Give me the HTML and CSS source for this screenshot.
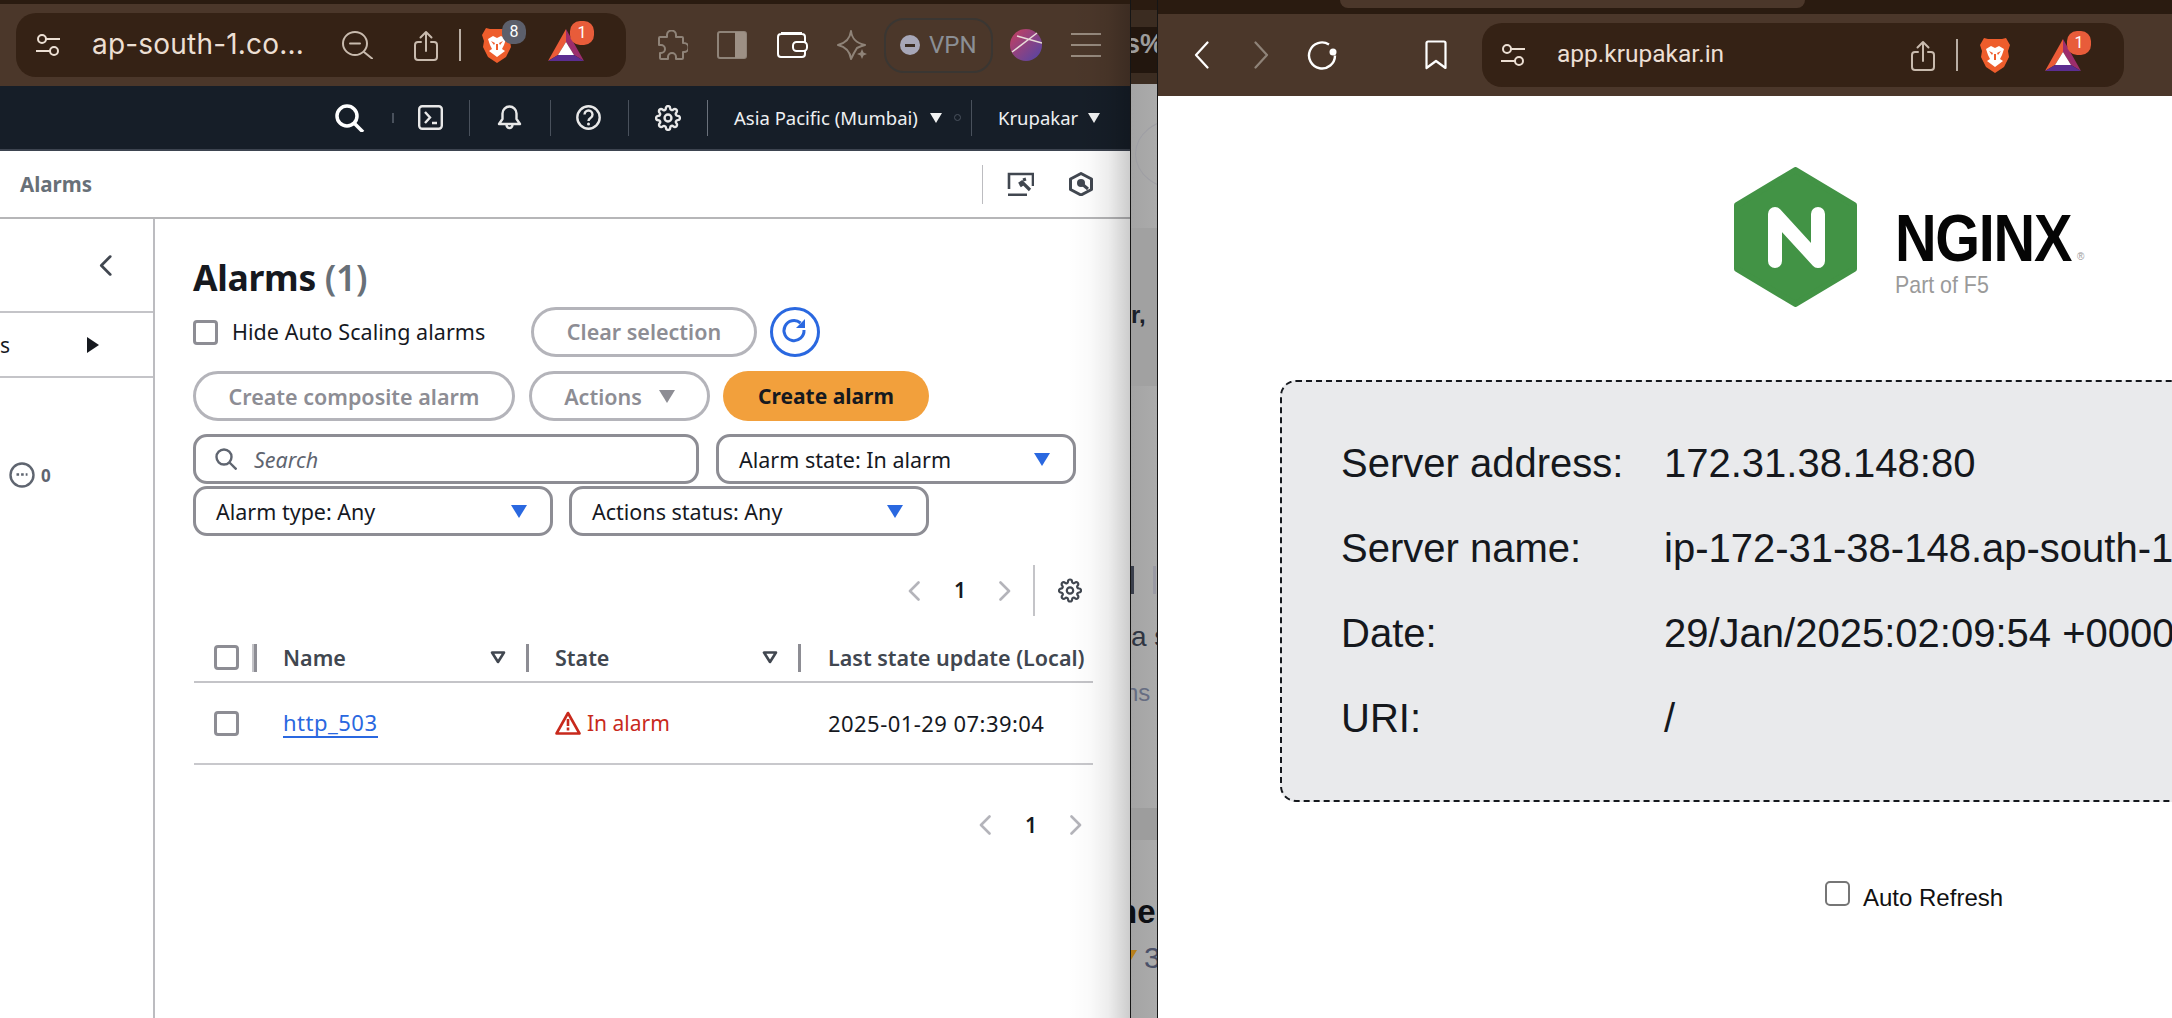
FILE: index.html
```html
<!DOCTYPE html>
<html lang="en">
<head>
<meta charset="utf-8">
<title>Alarms and NGINX status</title>
<link rel="stylesheet" href="styles.css">
</head>
<body>
<svg class="defs" aria-hidden="true">
  <symbol id="gear" viewBox="0 0 24 24"><circle cx="12" cy="12" r="3.2" fill="none" stroke="currentColor" stroke-width="2.200"/><path fill="none" stroke="currentColor" stroke-width="2.200" d="M19.4 15a1.65 1.65 0 0 0 .33 1.82l.06.06a2 2 0 0 1 0 2.83 2 2 0 0 1-2.83 0l-.06-.06a1.65 1.65 0 0 0-1.82-.33 1.65 1.65 0 0 0-1 1.51V21a2 2 0 0 1-2 2 2 2 0 0 1-2-2v-.09A1.65 1.65 0 0 0 9 19.4a1.65 1.65 0 0 0-1.82.33l-.06.06a2 2 0 0 1-2.83 0 2 2 0 0 1 0-2.83l.06-.06a1.65 1.65 0 0 0 .33-1.82 1.65 1.65 0 0 0-1.51-1H3a2 2 0 0 1-2-2 2 2 0 0 1 2-2h.09A1.65 1.65 0 0 0 4.6 9a1.65 1.65 0 0 0-.33-1.82l-.06-.06a2 2 0 0 1 0-2.83 2 2 0 0 1 2.83 0l.06.06a1.65 1.65 0 0 0 1.82.33H9a1.65 1.65 0 0 0 1-1.51V3a2 2 0 0 1 2-2 2 2 0 0 1 2 2v.09a1.65 1.65 0 0 0 1 1.51 1.65 1.65 0 0 0 1.82-.33l.06-.06a2 2 0 0 1 2.83 0 2 2 0 0 1 0 2.83l-.06.06a1.65 1.65 0 0 0-.33 1.82V9a1.65 1.65 0 0 0 1.51 1H21a2 2 0 0 1 2 2 2 2 0 0 1-2 2h-.09a1.65 1.65 0 0 0-1.51 1z"/></symbol>
  <symbol id="sliders" viewBox="0 0 24 22"><g fill="none" stroke="currentColor" stroke-width="2"><circle cx="6" cy="5" r="4"/><path d="M10 5h14"/><circle cx="18" cy="17" r="4"/><path d="M0 17h14"/></g></symbol>
  <symbol id="share" viewBox="0 0 24 31"><g fill="none" stroke="currentColor" stroke-width="2" stroke-linecap="round" stroke-linejoin="round"><path d="M7 12H4a3 3 0 0 0-3 3v12a3 3 0 0 0 3 3h16a3 3 0 0 0 3-3V15a3 3 0 0 0-3-3h-3"/><path d="M12 21V2M6.500 7.500 12 2l5.500 5.500"/></g></symbol>
  <symbol id="brave" viewBox="0 0 30 36"><path fill="#ee5d2c" d="M8 2h14l4-1 4 7-2 6 1 6-5 10-9 6-9-6-5-10 1-6-2-6 4-7z"/><path fill="#fff" d="M6 12l5-3 4 2 4-2 5 3-2 6-2 4 3 2-8 6-8-6 3-2-2-4z"/><path fill="#ee5d2c" d="M9 14l4 2-1 2zM21 14l-4 2 1 2zM14 17h2v6h-2z"/></symbol>
  <symbol id="bat" viewBox="0 0 36 32"><path fill="#ec5b38" d="M18 0 0 32l10-6 8-13z"/><path fill="#9c2d6c" d="M18 0l18 32-10-6-8-13z"/><path fill="#5c2d91" d="M0 32h36l-10-6H10z"/><path fill="#fff" d="M18 13l8 13H10z"/></symbol>
  <symbol id="chev-l" viewBox="0 0 12 20"><path fill="none" stroke="currentColor" stroke-width="2.600" stroke-linecap="round" stroke-linejoin="round" d="M10.500 1.500 2 10l8.500 8.500"/></symbol>
  <symbol id="chev-r" viewBox="0 0 12 20"><path fill="none" stroke="currentColor" stroke-width="2.600" stroke-linecap="round" stroke-linejoin="round" d="M1.500 1.500 10 10l-8.500 8.500"/></symbol>
</svg>

<main class="desk">
  <section class="win-left">
    <div class="edge"></div>
    <div class="toolbar">
      <div class="pill pill-left">
        <svg class="ic-sliders ml-20"><use href="#sliders"/></svg>
        <span class="url url-left ml-32">ap-south-1.co...</span>
        <svg class="ic-zoom ml-39" viewBox="0 0 31 28"><g fill="none" stroke="#c9bbae" stroke-width="2" stroke-linecap="round"><ellipse cx="13" cy="12.500" rx="12" ry="11.500"/><path d="M8 12.500h10M22 21l8 6.500"/></g></svg>
        <svg class="ic-share ml-41"><use href="#share"/></svg>
        <span class="pill-div ml-21"></span>
        <span class="ext ext-brave ml-21"><svg class="ic-brave"><use href="#brave"/></svg><b class="badge badge-gray">8</b></span>
        <span class="ext ext-bat ml-36"><svg class="ic-bat"><use href="#bat"/></svg><b class="badge badge-red">1</b></span>
      </div>
      <svg class="ic-puzzle ml-30" viewBox="0 0 32 30"><path fill="none" stroke="#8f8378" stroke-width="2" stroke-linejoin="round" d="M11 7V5a4.500 4.500 0 0 1 9 0v2h6a1 1 0 0 1 1 1v5h1a4.500 4.500 0 0 1 0 9h-1v6a1 1 0 0 1-1 1h-6v-2a4 4 0 0 0-8 0v2H5a1 1 0 0 1-1-1v-5h1a4 4 0 0 0 0-8H3V8a1 1 0 0 1 1-1z"/></svg>
      <svg class="ic-panel ml-29" viewBox="0 0 30 28"><rect x="1" y="1" width="28" height="26" rx="2" fill="none" stroke="#8f8378" stroke-width="2"/><path fill="#9d9085" d="M18 1h9a2 2 0 0 1 2 2v22a2 2 0 0 1-2 2h-9z"/></svg>
      <svg class="ic-wallet ml-30" viewBox="0 0 31 26"><g fill="none" stroke="#fff" stroke-width="2"><path d="M4 1h21M1 5a3 3 0 0 1 3-3h21a3 3 0 0 1 3 3v17a3 3 0 0 1-3 3H4a3 3 0 0 1-3-3z"/><rect x="16" y="10" width="14" height="9" rx="3.500" fill="#4b372a"/></g></svg>
      <svg class="ic-star ml-29" viewBox="0 0 31 30"><path fill="none" stroke="#8f8378" stroke-width="2" stroke-linejoin="round" d="M14 1c1 8 5 12 14 14-4 1-6 2-8 3l-3 5c-1 2-2 4-3 6-1-8-5-12-13-14 8-2 12-6 13-14z"/><path fill="#8f8378" d="M25 19l1.500 3.500L30 24l-3.500 1.500L25 29l-1.500-3.500L20 24l3.500-1.500z"/></svg>
      <div class="vpn ml-16"><span class="vpn-dot"></span><span class="vpn-text">VPN</span></div>
      <svg class="ic-avatar ml-17" viewBox="0 0 32 32"><defs><linearGradient id="av" x1="0" y1="0" x2="1" y2="1"><stop offset="0" stop-color="#c8405e"/><stop offset="1" stop-color="#4f45a8"/></linearGradient></defs><circle cx="16" cy="16" r="16" fill="url(#av)"/><path fill="none" stroke="#e8dcd8" stroke-width="1.500" d="M2 23 27 4M7 7l25 7"/></svg>
      <svg class="ic-burger ml-29" viewBox="0 0 30 24"><path stroke="#978a7e" stroke-width="2" d="M0 1h30M0 12h30M0 23h30"/></svg>
    </div>

    <nav class="navbar">
      <svg class="ic-search ml-335" viewBox="0 0 30 28"><g fill="none" stroke="#fff" stroke-width="3.500"><circle cx="12" cy="12" r="10"/><path d="M19 19l9 9"/></g></svg>
      <span class="nsep nsep-short ml-27"></span>
      <svg class="ic-nav ml-24" viewBox="0 0 25 25"><rect x="1.200" y="1.200" width="22.600" height="22.600" rx="3" fill="none" stroke="#e8e8e8" stroke-width="2.400"/><path fill="none" stroke="#e8e8e8" stroke-width="2.400" d="M7 7l5 5.500L7 18M14 18h5"/></svg>
      <span class="nsep ml-26"></span>
      <svg class="ic-nav ml-27" viewBox="0 0 24 25"><path fill="none" stroke="#e8e8e8" stroke-width="2.400" stroke-linejoin="round" d="M12 1.500a7 7 0 0 1 7 7V14l3.500 5H1.500L5 14V8.500a7 7 0 0 1 7-7zM9 20a3 3 0 0 0 6 0"/></svg>
      <span class="nsep ml-28"></span>
      <svg class="ic-nav ml-25" viewBox="0 0 25 25"><circle cx="12.500" cy="12.500" r="11.200" fill="none" stroke="#e8e8e8" stroke-width="2.400"/><path fill="none" stroke="#e8e8e8" stroke-width="2.400" d="M8.500 9.500a4 4 0 1 1 6 3.500c-1.300.8-2 1.500-2 3"/><circle cx="12.500" cy="19" r="1.500" fill="#e8e8e8"/></svg>
      <span class="nsep ml-27"></span>
      <svg class="ic-gear-nav ml-26"><use href="#gear"/></svg>
      <span class="nsep nsep-strong ml-26"></span>
      <span class="nav-text nav-region ml-26">Asia Pacific (Mumbai)</span>
      <span class="tri tri-white ml-11"></span>
      <span class="ring ml-12"></span>
      <span class="nsep ml-10"></span>
      <span class="nav-text nav-user ml-26">Krupakar</span>
      <span class="tri tri-white ml-10"></span>
    </nav>

    <div class="crumbs">
      <span class="crumb">Alarms</span>
      <span class="crumb-sep"></span>
      <svg class="ic-tool" viewBox="0 0 27 24"><g fill="none" stroke="#414750" stroke-width="2.600"><path d="M2 17V2h24v12"/><path d="M1 23h19" stroke-width="3"/><path stroke-width="3.200" d="M12 12l3-2 8 8"/><path stroke-width="3" d="M16 8l3-1M13 14l3-2"/></g></svg>
      <svg class="ic-hex" viewBox="0 0 24 24"><path fill="none" stroke="#414750" stroke-width="3" stroke-linejoin="round" d="M12 1.500 22.500 7v10.500L12 23 1.500 17.500V7z"/><circle cx="12" cy="11" r="4" fill="#414750"/><path stroke="#414750" stroke-width="3" d="M13 12l6 5"/></svg>
    </div>

    <div class="workspace">
      <aside class="side">
        <div class="side-head"><svg class="ic-chev-side"><use href="#chev-l"/></svg></div>
        <div class="side-row"><span class="side-s">s</span><span class="side-tri"></span></div>
        <div class="side-status">
          <svg class="ic-status" viewBox="0 0 26 26"><circle cx="13" cy="13" r="11.500" fill="none" stroke="#5f6570" stroke-width="2.400"/><path stroke="#5f6570" stroke-width="2.600" stroke-dasharray="2.600 2" d="M7.500 12.500h11"/></svg>
          <b class="side-count">0</b>
        </div>
      </aside>

      <div class="content">
        <h1 class="title">Alarms <span class="title-count">(1)</span></h1>
        <div class="row row-filter">
          <span class="check"></span>
          <span class="hide-label">Hide Auto Scaling alarms</span>
          <button class="btn btn-off btn-clear">Clear selection</button>
          <span class="refresh"><svg viewBox="0 0 28 28" class="ic-refresh"><g fill="none" stroke="#2a68e0" stroke-width="3"><path d="M23 12a10 10 0 1 1-3.500-7"/></g><path fill="#2a68e0" d="M24 1v9h-9z"/></svg></span>
        </div>
        <div class="row row-actions">
          <button class="btn btn-off btn-composite">Create composite alarm</button>
          <button class="btn btn-off btn-actions">Actions <span class="tri tri-gray"></span></button>
          <button class="btn btn-create">Create alarm</button>
        </div>
        <div class="row row-search">
          <div class="field field-search">
            <svg class="ic-field" viewBox="0 0 22 22"><g fill="none" stroke="#5f6570" stroke-width="2.400"><circle cx="9" cy="9" r="7.500"/><path d="M14.500 14.500l7 7"/></g></svg>
            <span class="placeholder">Search</span>
          </div>
          <div class="field field-select"><span>Alarm state: In alarm</span><span class="tri tri-blue"></span></div>
        </div>
        <div class="row row-selects">
          <div class="field field-select"><span>Alarm type: Any</span><span class="tri tri-blue"></span></div>
          <div class="field field-select"><span>Actions status: Any</span><span class="tri tri-blue"></span></div>
        </div>

        <div class="pager pager-top">
          <svg class="ic-page"><use href="#chev-l"/></svg>
          <b class="page-num">1</b>
          <svg class="ic-page"><use href="#chev-r"/></svg>
          <span class="page-sep"></span>
          <svg class="ic-gear"><use href="#gear"/></svg>
        </div>

        <div class="thead">
          <div class="tc tc-check"><span class="check check-sm"></span><span class="th-sep th-sep-light"></span></div>
          <div class="tc tc-col"><span class="th-sep"></span><span class="th-text">Name</span><svg class="ic-sort" viewBox="0 0 16 13"><path fill="none" stroke="#414750" stroke-width="2.600" stroke-linejoin="round" d="M2 1.500h12L8 11z"/></svg></div>
          <div class="tc tc-col"><span class="th-sep"></span><span class="th-text">State</span><svg class="ic-sort" viewBox="0 0 16 13"><path fill="none" stroke="#414750" stroke-width="2.600" stroke-linejoin="round" d="M2 1.500h12L8 11z"/></svg></div>
          <div class="tc tc-last"><span class="th-sep"></span><span class="th-text th-last">Last state update (Local)</span></div>
        </div>
        <div class="trow">
          <div class="td td-check"><span class="check check-sm"></span></div>
          <div class="td td-col"><a class="link" href="#">http_503</a></div>
          <div class="td td-col td-alarm"><svg class="ic-warn" viewBox="0 0 26 24"><path fill="none" stroke="#c8291c" stroke-width="2.600" stroke-linejoin="round" d="M13 2 24.500 22.500h-23z"/><path stroke="#c8291c" stroke-width="2.600" d="M13 8v7M13 16.500v3"/></svg><span>In alarm</span></div>
          <div class="td td-last">2025-01-29 07:39:04</div>
        </div>
        <div class="pager pager-bottom">
          <svg class="ic-page"><use href="#chev-l"/></svg>
          <b class="page-num">1</b>
          <svg class="ic-page"><use href="#chev-r"/></svg>
        </div>
      </div>
    </div>
  </section>

  <section class="strip">
    <div class="strip-top"><span class="strip-pct">s%</span></div>
    <span class="strip-circle"></span>
    <span class="strip-band strip-band-a"></span>
    <span class="strip-band strip-band-b"></span>
    <span class="strip-frag frag-er">r,</span>
    <span class="strip-bar strip-bar-dark"></span>
    <span class="strip-bar strip-bar-light"></span>
    <span class="strip-frag frag-as">a s</span>
    <span class="strip-frag frag-ns">ns</span>
    <span class="strip-frag frag-he">he</span>
    <span class="strip-star"></span>
    <span class="strip-frag frag-3">3</span>
  </section>

  <section class="win-right">
    <div class="tabstrip"><span class="tab"></span></div>
    <div class="toolbar toolbar-right">
      <svg class="ic-nav-chev ml-36" viewBox="0 0 15 28"><path fill="none" stroke="#fff" stroke-width="2.200" stroke-linecap="round" stroke-linejoin="round" d="M13.500 1.500 2 14l11.500 12.500"/></svg>
      <svg class="ic-nav-chev ml-45" viewBox="0 0 15 28"><path fill="none" stroke="#8f8378" stroke-width="2.200" stroke-linecap="round" stroke-linejoin="round" d="M1.500 1.500 13 14 1.500 26.500"/></svg>
      <svg class="ic-reload ml-38" viewBox="0 0 31 29"><path fill="none" stroke="#fff" stroke-width="2.400" d="M22 3.500A13 13 0 1 0 28 14.500"/><circle cx="26" cy="11" r="3.500" fill="#fff"/></svg>
      <svg class="ic-bookmark ml-87" viewBox="0 0 22 30"><path fill="none" stroke="#fff" stroke-width="2.200" stroke-linejoin="round" d="M3 1.500h16a1.500 1.500 0 0 1 1.500 1.500v25L11 21l-9.500 7V3A1.500 1.500 0 0 1 3 1.500z"/></svg>
      <div class="pill pill-right ml-35">
        <svg class="ic-sliders ml-19"><use href="#sliders"/></svg>
        <span class="url url-right ml-32">app.krupakar.in</span>
        <svg class="ic-share ml-149"><use href="#share"/></svg>
        <span class="pill-div ml-21"></span>
        <span class="ext ext-brave-r ml-21"><svg class="ic-brave-r"><use href="#brave"/></svg></span>
        <span class="ext ext-bat ml-34"><svg class="ic-bat"><use href="#bat"/></svg><b class="badge badge-red">1</b></span>
      </div>
    </div>
    <div class="page">
      <div class="logo">
        <svg class="logo-hex" viewBox="0 0 123 140"><path fill="#429345" stroke="#429345" stroke-width="6" stroke-linejoin="round" d="M61.500 3 120 38v64l-58.500 35L3 102V38z"/><path fill="none" stroke="#fff" stroke-width="14" stroke-linecap="round" stroke-linejoin="round" d="M41 94V47l43 47V47"/></svg>
        <div class="logo-text">
          <div class="logo-word"><span class="logo-name">NGINX</span><span class="logo-reg">®</span></div>
          <div class="logo-sub">Part of F5</div>
        </div>
      </div>
      <div class="info">
        <div class="info-label">Server address:</div><div class="info-value">172.31.38.148:80</div>
        <div class="info-label">Server name:</div><div class="info-value">ip-172-31-38-148.ap-south-1</div>
        <div class="info-label">Date:</div><div class="info-value">29/Jan/2025:02:09:54 +0000</div>
        <div class="info-label">URI:</div><div class="info-value">/</div>
      </div>
      <label class="auto"><span class="auto-box"></span><span class="auto-text">Auto Refresh</span></label>
    </div>
  </section>
</main>
</body>
</html>
```
FILE: styles.css
```css
* { box-sizing: border-box; }
html, body { margin: 0; padding: 0; }
body { width: 2172px; height: 1018px; overflow: hidden; background: #acacac; font-family: "Noto Sans", sans-serif; color: #16191f; }
.defs { position: absolute; width: 0; height: 0; }
svg { display: block; flex: none; }
button { font-family: inherit; }

.ml-10 { margin-left: 10px; } .ml-11 { margin-left: 11px; } .ml-12 { margin-left: 12px; }
.ml-16 { margin-left: 16px; } .ml-17 { margin-left: 17px; } .ml-19 { margin-left: 19px; }
.ml-20 { margin-left: 20px; } .ml-21 { margin-left: 21px; } .ml-24 { margin-left: 24px; }
.ml-25 { margin-left: 25px; } .ml-26 { margin-left: 26px; } .ml-27 { margin-left: 27px; }
.ml-28 { margin-left: 28px; } .ml-29 { margin-left: 29px; } .ml-30 { margin-left: 30px; }
.ml-32 { margin-left: 32px; } .ml-34 { margin-left: 34px; } .ml-35 { margin-left: 35px; }
.ml-36 { margin-left: 36px; } .ml-38 { margin-left: 38px; } .ml-39 { margin-left: 39px; }
.ml-41 { margin-left: 41px; } .ml-45 { margin-left: 45px; } .ml-87 { margin-left: 87px; }
.ml-149 { margin-left: 149px; } .ml-335 { margin-left: 335px; }

.desk { display: flex; width: 2172px; height: 1018px; }

/* left window */
.win-left { position: relative; flex: none; width: 1130px; height: 1018px; background: #fff; display: flex; flex-direction: column; overflow: hidden; border-top: 4px solid #2a1b10; }
.edge { position: absolute; top: 0; right: 0; bottom: 0; width: 62px; z-index: 5; pointer-events: none; background: linear-gradient(to right, rgba(0,0,0,0) 0%, rgba(0,0,0,.02) 35%, rgba(0,0,0,.07) 65%, rgba(0,0,0,.2) 100%); }

.toolbar { flex: none; height: 82px; background: #4b372a; display: flex; align-items: center; }
.pill { flex: none; height: 64px; border-radius: 20px; background: #352215; display: flex; align-items: center; }
.pill-left { width: 610px; margin-left: 16px; }
.pill-right { width: 642px; }
.url { flex: none; color: #ecdfd3; white-space: nowrap; padding-bottom: 3px; }
.url-left { width: 211px; font-family: Inter, sans-serif; font-size: 28px; letter-spacing: .2px; }
.url-right { width: 205px; font-family: Roboto, sans-serif; font-size: 24.500px; }
.ic-sliders { width: 24px; height: 22px; color: #ecdfd3; }
.ic-zoom { width: 31px; height: 28px; }
.ic-share { width: 24px; height: 31px; color: #c9bbae; }
.pill-div { flex: none; width: 2px; height: 32px; background: #b9aea4; }
.ext { position: relative; flex: none; display: block; }
.ext-brave { width: 30px; height: 36px; }
.ext-brave-r { width: 32px; height: 36px; }
.ext-bat { width: 36px; height: 32px; }
.ic-brave { width: 30px; height: 36px; }
.ic-brave-r { width: 32px; height: 36px; }
.ic-bat { width: 36px; height: 32px; }
.badge { position: absolute; top: -7px; left: 20px; width: 24px; height: 24px; border-radius: 10px; color: #fff; font: 400 16px/24px Roboto, sans-serif; text-align: center; }
.badge-gray { background: #5c5f6b; }
.badge-red { left: 22px; top: -8px; background: #e85c3a; }

.ic-puzzle { width: 32px; height: 30px; }
.ic-panel { width: 30px; height: 28px; }
.ic-wallet { width: 31px; height: 26px; }
.ic-star { width: 31px; height: 30px; }
.vpn { flex: none; width: 109px; height: 55px; border: 2px solid #3a3632; border-radius: 20px; display: flex; align-items: center; padding-left: 14px; }
.vpn-dot { position: relative; flex: none; width: 20px; height: 20px; border-radius: 50%; background: #a7a7b8; }
.vpn-dot::after { content: ""; position: absolute; left: 5px; top: 8.500px; width: 10px; height: 3px; background: #3a2c22; }
.vpn-text { margin-left: 9px; font: 400 24px Roboto, sans-serif; color: #8b8f95; }
.ic-avatar { width: 32px; height: 32px; }
.ic-burger { width: 30px; height: 24px; }

/* console nav */
.navbar { flex: none; height: 65px; background: #161e28; border-bottom: 2px solid #3d4450; display: flex; align-items: center; color: #e8e8e8; }
.ic-search { width: 30px; height: 28px; }
.nsep { flex: none; width: 1px; height: 36px; background: #49515c; }
.nsep-short { width: 2px; height: 10px; }
.nsep-strong { width: 1px; background: #6a717b; }
.ic-nav { width: 25px; height: 25px; }
.ic-gear-nav { width: 26px; height: 26px; color: #e8e8e8; }
.nav-text { flex: none; font-size: 18.500px; color: #eef0f2; white-space: nowrap; }
.nav-region { width: 185px; }
.nav-user { width: 80px; }
.ring { flex: none; width: 7px; height: 7px; border: 1px solid #4a525d; border-radius: 50%; }

.tri { flex: none; display: block; width: 0; height: 0; border-style: solid; border-color: transparent; border-bottom-width: 0; }
.tri-white { border-width: 10px 6.500px 0; border-top-color: #f2f3f3; }
.tri-blue { border-width: 13px 8px 0; border-top-color: #2a68e0; }
.tri-gray { border-width: 13px 8.500px 0; border-top-color: #8d8d94; }

/* breadcrumb */
.crumbs { flex: none; height: 68px; background: #fff; border-bottom: 2px solid #b6b6b8; display: flex; align-items: center; padding: 0 37px 0 20px; }
.crumb { font-size: 20.500px; font-weight: 700; color: #687078; }
.crumb-sep { width: 1px; height: 39px; background: #bcbcc0; margin-left: auto; }
.ic-tool { width: 27px; height: 24px; margin-left: 24px; }
.ic-hex { width: 24px; height: 24px; margin-left: 35px; }

.workspace { flex: 1; display: flex; min-height: 0; }
.side { flex: none; width: 155px; border-right: 2px solid #bcbcc0; display: flex; flex-direction: column; }
.side-head { height: 94px; border-bottom: 2px solid #c4c4c8; display: flex; align-items: center; padding-left: 99px; }
.ic-chev-side { width: 13px; height: 21px; color: #414750; }
.side-row { height: 65px; border-bottom: 2px solid #c4c4c8; display: flex; align-items: center; justify-content: space-between; padding-right: 54px; }
.side-s { font-size: 21px; color: #16191f; }
.side-tri { width: 0; height: 0; border-style: solid; border-width: 8px 0 8px 12px; border-color: transparent transparent transparent #16191f; }
.side-status { display: flex; align-items: center; margin-top: 84px; padding-left: 9px; }
.ic-status { width: 26px; height: 26px; }
.side-count { margin-left: 6px; font-size: 17px; font-weight: 700; color: #5f6570; }

.content { flex: none; width: 937px; padding-left: 38px; display: flex; flex-direction: column; }
.title { margin: 33px 0 5px; height: 50px; font-size: 35.500px; line-height: 50px; font-weight: 700; letter-spacing: -.3px; color: #16191f; white-space: nowrap; }
.title-count { font-weight: 600; color: #687078; }
.row { display: flex; align-items: center; flex: none; }
.row-filter { height: 50px; }
.check { flex: none; display: block; width: 25px; height: 25px; border: 3px solid #8d8d94; border-radius: 4px; background: #fff; }
.hide-label { flex: none; width: 254px; margin: 0 45px 0 14px; padding-bottom: 2px; font-size: 21.500px; letter-spacing: .05px; white-space: nowrap; color: #16191f; }
.btn { flex: none; height: 50px; border-radius: 25px; font-size: 21.500px; font-weight: 600; display: flex; align-items: center; justify-content: center; padding: 0; white-space: nowrap; }
.btn-off { background: #fff; border: 3px solid #b4b4ba; color: #8d8d94; }
.btn-clear { width: 226px; padding-bottom: 2px; }
.refresh { flex: none; width: 50px; height: 50px; margin-left: 13px; border: 3px solid #2a68e0; border-radius: 50%; display: flex; align-items: center; justify-content: center; }
.ic-refresh { width: 28px; height: 28px; }
.row-actions { height: 50px; margin-top: 14px; }
.btn-composite { width: 322px; }
.btn-actions { width: 181px; margin-left: 14px; gap: 17px; }
.btn-create { width: 206px; margin-left: 13px; background: #f2a03c; border: 0; color: #16191f; font-size: 21px; font-weight: 700; }
.row-search { height: 50px; margin-top: 13px; gap: 17px; }
.row-selects { height: 50px; margin-top: 2px; gap: 16px; }
.field { flex: none; height: 50px; background: #fff; border: 3px solid #8d8d94; border-radius: 14px; display: flex; align-items: center; font-size: 21.500px; white-space: nowrap; }
.field-search { width: 506px; padding-left: 19px; }
.field-select { width: 360px; padding: 0 23px 0 20px; justify-content: space-between; }
.ic-field { width: 22px; height: 22px; }
.placeholder { margin-left: 17px; font-style: italic; color: #5f6570; }

.pager { flex: none; display: flex; align-items: center; justify-content: flex-end; width: 889px; }
.pager-top { height: 51px; margin-top: 29px; }
.pager-bottom { height: 40px; margin-top: 40px; }
.ic-page { width: 12px; height: 20px; color: #b4b4ba; }
.page-num { width: 10px; margin: 0 35px 0 34px; font-size: 21px; line-height: 1; font-weight: 600; color: #16191f; text-align: center; }
.page-sep { width: 2px; height: 51px; margin: 0 23px 0 22px; background: #c4c4c8; }
.ic-gear { width: 24px; height: 25px; color: #414750; }

.thead, .trow { flex: none; display: grid; grid-template-columns: 60px 272px 272px 295px; width: 899px; margin-left: 1px; }
.thead { height: 48px; margin-top: 19px; border-bottom: 2px solid #c4c4c8; }
.trow { height: 82px; border-bottom: 2px solid #c8c8cc; }
.tc { display: flex; align-items: center; padding-bottom: 1px; }
.tc-check { padding-left: 20px; justify-content: space-between; }
.check-sm { width: 25px; height: 25px; }
.th-sep { flex: none; width: 3px; height: 28px; background: #8d8d94; }
.th-sep-light { width: 2px; background: #c4c4c8; }
.tc-col { padding-right: 20px; }
.th-text { margin-left: 26px; font-size: 21.500px; font-weight: 600; color: #414750; }
.th-last { margin-left: 27px; white-space: nowrap; }
.ic-sort { width: 16px; height: 13px; margin-left: auto; }
.td { display: flex; align-items: center; font-size: 21px; padding-left: 29px; }
.td-check { padding-left: 20px; }
.td-last { padding-left: 30px; font-size: 22px; letter-spacing: .45px; white-space: nowrap; color: #16191f; }
.link { color: #2a68e0; font-size: 22px; letter-spacing: .5px; text-decoration: none; border-bottom: 2px solid #2a68e0; line-height: 28px; }
.td-alarm { color: #c8291c; }
.ic-warn { width: 26px; height: 24px; margin-right: 6px; }

/* sliver of the window behind */
.strip { position: relative; flex: none; width: 28px; height: 1018px; overflow: hidden; border-left: 1px solid #151515; border-right: 1px solid #151515; background: linear-gradient(to right, #a4a4a4, #ababab); }
.strip-top { height: 84px; background: linear-gradient(#2a1b10 0, #2a1b10 10px, #3b2c21 10px, #3b2c21 27px, #22160e 27px, #22160e 73px, #3b2c21 73px); overflow: hidden; }
.strip-pct { display: block; margin: 26px 0 0 -6px; font: 700 27px/36px "Liberation Sans", sans-serif; color: #9c9c9c; white-space: nowrap; }
.strip-circle { position: absolute; left: 4px; top: 118px; width: 90px; height: 72px; border: 1px solid #9e9ea4; border-radius: 50%; }
.strip-band { position: absolute; left: 0; right: 0; background: #a1a1a1; }
.strip-band-a { top: 228px; height: 158px; }
.strip-band-b { top: 808px; height: 32px; background: #9d9d9d; }
.strip-frag { position: absolute; left: 0; white-space: nowrap; font-family: "Liberation Sans", sans-serif; }
.frag-er { top: 301px; font-size: 24px; line-height: 28px; font-weight: 700; color: #1b2029; }
.strip-bar { position: absolute; top: 566px; height: 28px; width: 3px; }
.strip-bar-dark { left: 0; background: #3a3f4c; }
.strip-bar-light { left: 22px; background: #9a9aa4; }
.frag-as { top: 620px; font-size: 28px; line-height: 34px; color: #2f3542; }
.frag-ns { top: 678px; left: -6px; font-size: 24px; line-height: 30px; color: #666d82; }
.frag-he { top: 892px; left: -14px; font-size: 33px; line-height: 40px; font-weight: 700; color: #0d0f14; }
.strip-star { position: absolute; left: 0; top: 950px; width: 0; height: 0; border-style: solid; border-width: 10px 6px 0 0; border-color: #b8801c transparent transparent transparent; }
.frag-3 { top: 940px; left: 13px; font-size: 30px; line-height: 36px; color: #4a5068; }

/* right window */
.win-right { flex: none; width: 1014px; height: 1018px; background: #fff; display: flex; flex-direction: column; overflow: hidden; }
.tabstrip { flex: none; height: 14px; background: #2a1b10; }
.tab { display: block; width: 465px; height: 8px; margin-left: 182px; background: #4b372a; border-radius: 0 0 8px 8px; }
.toolbar-right { height: 82px; }
.ic-nav-chev { width: 15px; height: 28px; }
.ic-reload { width: 31px; height: 29px; }
.ic-bookmark { width: 22px; height: 30px; }

.page { flex: 1; display: flex; flex-direction: column; overflow: hidden; }
.logo { flex: none; display: flex; margin: 71px 0 0 576px; height: 140px; }
.logo-hex { width: 123px; height: 140px; }
.logo-text { margin-left: 38px; }
.logo-word { position: relative; margin-top: 40px; height: 62px; width: 200px; }
.logo-name { display: block; width: 212px; font: 700 67px/62px "Liberation Sans", sans-serif; letter-spacing: -1.500px; color: #050505; transform: scaleX(.86); transform-origin: left center; white-space: nowrap; }
.logo-reg { position: absolute; left: 182px; top: 44px; font: 400 10px/12px "Liberation Sans", sans-serif; color: #9a9a9a; }
.logo-sub { margin-top: 4px; font: 400 24px/24px "Liberation Sans", sans-serif; color: #9a9a9a; transform: scaleX(.89); transform-origin: left center; white-space: nowrap; }

.info { flex: none; display: grid; grid-template-columns: 323px 1fr; grid-auto-rows: 85px; align-items: center; width: 1100px; height: 422px; margin: 73px 0 0 122px; padding: 39px 0 0 59px; background: #e9eaec; border: 2px dashed #15181d; border-radius: 16px; font: 400 40px "Liberation Sans", sans-serif; color: #15181d; white-space: nowrap; }

.auto { flex: none; display: flex; align-items: center; margin: 79px 0 0 667px; height: 25px; }
.auto-box { flex: none; width: 25px; height: 25px; border: 2px solid #767676; border-radius: 5px; background: #fff; }
.auto-text { margin: 9px 0 0 13px; font: 400 24px "Liberation Sans", sans-serif; color: #111; white-space: nowrap; }
```
